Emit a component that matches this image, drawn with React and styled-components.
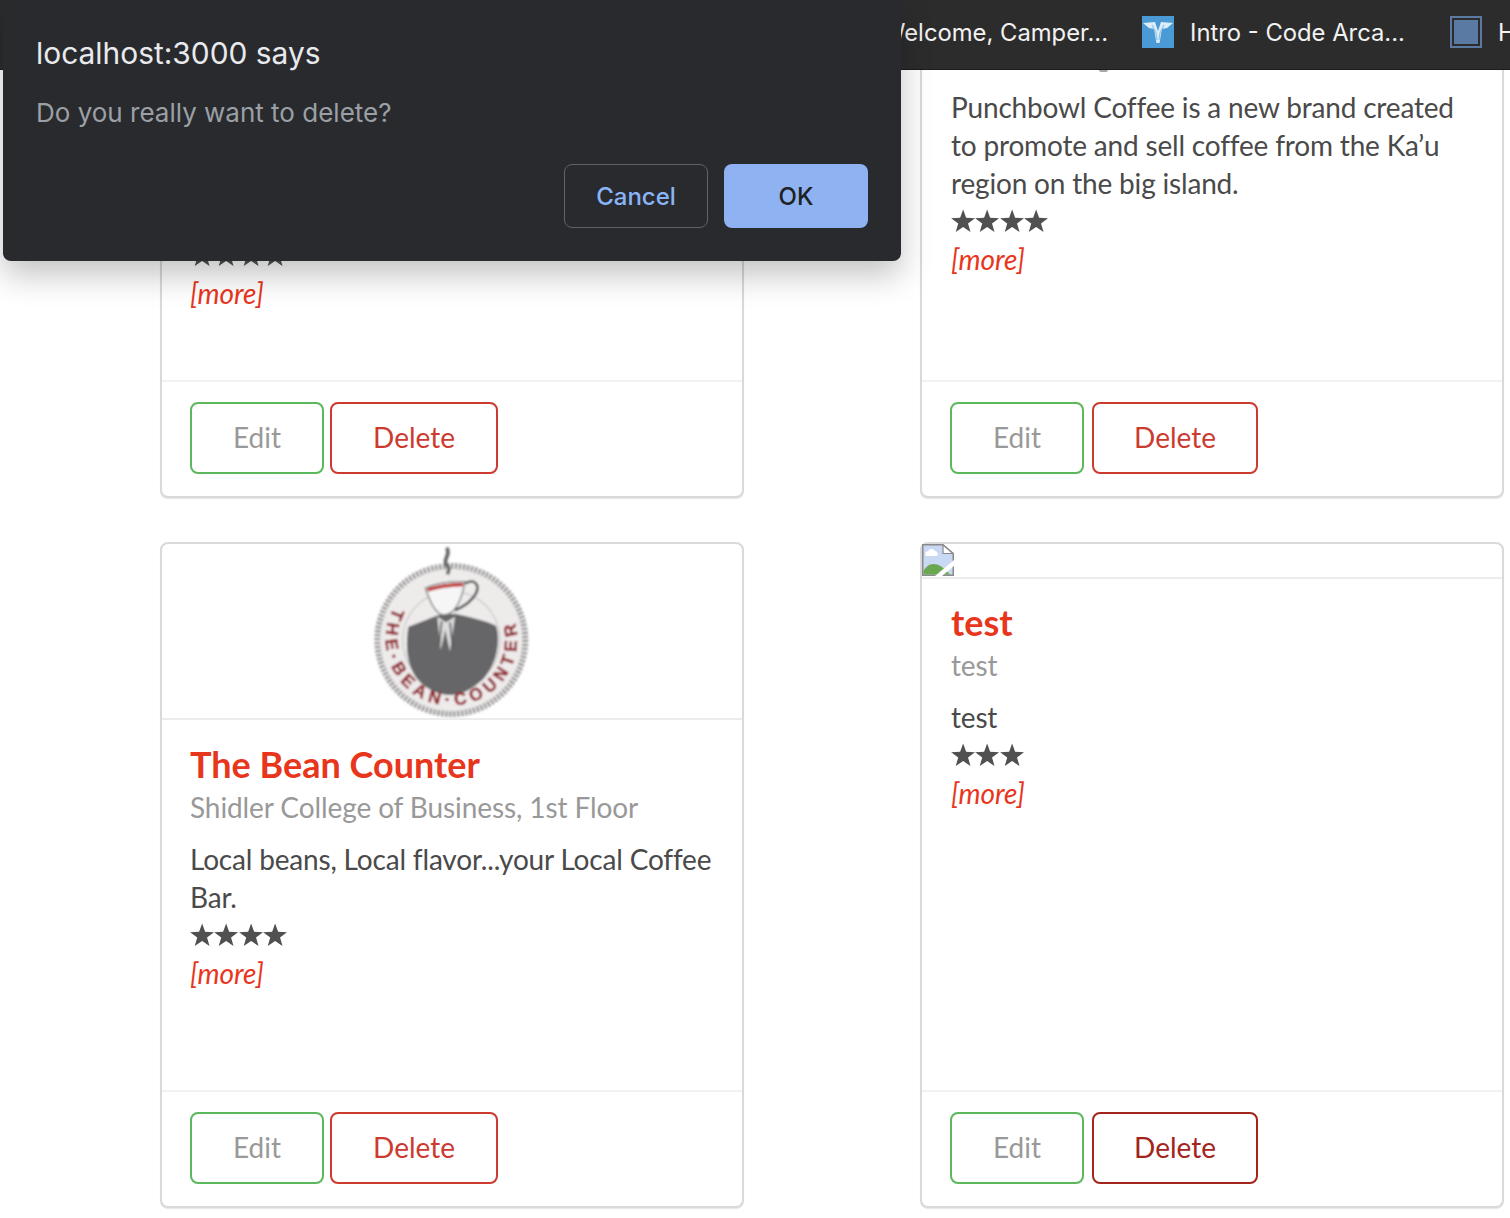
import React from 'react';
import styled, { createGlobalStyle } from 'styled-components';

const GlobalStyle = createGlobalStyle`
  html, body {
    margin: 0;
    padding: 0;
    background: #fff;
  }
  body {
    font-family: Lato, "Liberation Sans", sans-serif;
  }
`;

const Page = styled.div`
  position: relative;
  width: 1510px;
  height: 1218px;
  overflow: hidden;
  background: #fff;
`;

const TabBar = styled.div`
  display: flex;
  align-items: center;
  height: 70px;
  padding: 0 0 5px 882px;
  background: #2c2c2c;
  border-bottom: 1px solid #1c1c1c;
  box-sizing: border-box;
  overflow: hidden;
  white-space: nowrap;
`;

const Tab = styled.div`
  display: flex;
  align-items: center;
  flex: none;
  gap: 16px;
  width: ${(p) => p.$width}px;
`;

const TabTitle = styled.span`
  font-family: Inter, "Liberation Sans", sans-serif;
  font-size: 23.8px;
  color: #f2f2f2;
`;

// tail of a letter from the hidden subtitle, poking out below the tab bar
const Descender = styled.div`
  position: absolute;
  top: 70px;
  left: 1099px;
  width: 9px;
  height: 2px;
  border-radius: 0 0 4px 4px;
  background: #a8a8a8;
`;

const Grid = styled.div`
  display: grid;
  grid-template-columns: 584px 584px;
  grid-template-rows: 428px 666px;
  column-gap: 176px;
  row-gap: 44px;
  padding-left: 160px;
`;

const Card = styled.section`
  display: flex;
  flex-direction: column;
  box-sizing: border-box;
  background: #fff;
  border: 2px solid #d9d9da;
  border-top-width: ${(p) => (p.$clipped ? 0 : 2)}px;
  border-radius: ${(p) => (p.$clipped ? '0 0 8px 8px' : '8px')};
  box-shadow: 0 1px 1px rgba(0, 0, 0, 0.1);
`;

const ImageArea = styled.div`
  display: flex;
  justify-content: ${(p) => (p.$broken ? 'flex-start' : 'center')};
  height: ${(p) => p.$height}px;
  flex: none;
  border-bottom: 2px solid #ececec;
`;

const Body = styled.div`
  flex: 1;
  padding: ${(p) => p.$top}px 28px 0 ${(p) => p.$left || 28}px;
`;

const Title = styled.h2`
  margin: 0;
  font-size: 36px;
  line-height: 46px;
  font-weight: 700;
  color: #e8361c;
`;

const Subtitle = styled.div`
  margin-top: 1px;
  font-size: 28px;
  line-height: 38px;
  color: #999;
  letter-spacing: -0.1px;
`;

const Description = styled.p`
  margin: ${(p) => (p.$flush ? 0 : '14px 0 0')};
  font-size: 28px;
  line-height: 38px;
  color: #4a4a4a;
  letter-spacing: -0.18px;
`;

const Stars = styled.div`
  display: flex;
  height: 38px;
  align-items: center;
`;

const More = styled.a`
  display: block;
  font-size: 28px;
  line-height: 38px;
  font-style: italic;
  color: #e8361c;
`;

const Footer = styled.div`
  display: flex;
  flex: none;
  box-sizing: border-box;
  height: 116px;
  padding: 20px 28px;
  gap: ${(p) => p.$gap}px;
  border-top: 2px solid #f1f1f1;
`;

const Button = styled.button`
  box-sizing: border-box;
  height: 72px;
  width: ${(p) => p.$width}px;
  padding: 0 0 2px;
  background: #fff;
  border: 2px solid ${(p) => p.$border};
  border-radius: 8px;
  color: ${(p) => p.$color};
  font-family: Lato, "Liberation Sans", sans-serif;
  font-size: 28px;
`;

const Dialog = styled.div`
  position: absolute;
  top: 0;
  left: 3px;
  width: 898px;
  height: 261px;
  box-sizing: border-box;
  padding: 35px 33px 0;
  background: #292a2d;
  border-radius: 0 0 8px 8px;
  box-shadow: 0 14px 32px rgba(0, 0, 0, 0.24);
  font-family: Inter, "Liberation Sans", sans-serif;
`;

const DialogTitle = styled.div`
  font-size: 29.9px;
  line-height: 36px;
  color: #e8eaed;
`;

const DialogText = styled.div`
  margin-top: 25px;
  font-size: 26px;
  line-height: 34px;
  color: #9aa0a6;
`;

const DialogActions = styled.div`
  display: flex;
  justify-content: flex-end;
  gap: 16px;
  margin-top: 34px;
`;

const DialogButton = styled.button`
  box-sizing: border-box;
  width: 144px;
  height: 64px;
  border-radius: 8px;
  border: ${(p) => (p.$primary ? 'none' : '1px solid #5f6368')};
  background: ${(p) => (p.$primary ? '#8fb3f2' : 'transparent')};
  color: ${(p) => (p.$primary ? '#202124' : '#8ab4f8')};
  font-family: Inter, "Liberation Sans", sans-serif;
  font-size: 24px;
  font-weight: 500;
`;

const ArcadeIcon = () => (
  <svg width="32" height="32" viewBox="0 0 32 32">
    <rect width="32" height="32" fill="#4a9ad6" />
    <path d="M1 7 L13 6 L16 15 L19 6 L31 7 L25 12 L20 13 L17.5 27 L14.5 27 L12 13 L7 12 Z" fill="#dcedf8" />
    <path d="M10 9 L14 17 L15 24 M22 9 L18 17 L17 24" fill="none" stroke="#8fc3e8" strokeWidth="1.2" />
  </svg>
);

const SquareIcon = () => (
  <svg width="32" height="32" viewBox="0 0 32 32">
    <rect x="1" y="1" width="30" height="30" fill="none" stroke="#5b7aa3" strokeWidth="2" />
    <rect x="4" y="4" width="24" height="24" fill="#5b7aa3" />
  </svg>
);

const BrokenImage = () => (
  <svg width="32" height="32" viewBox="0 0 32 32">
    <path d="M0.75 0.75 H21 L31.25 9.5 V31.25 H0.75 Z" fill="#c9d9f4" stroke="#8a8a8a" strokeWidth="1.5" />
    <path d="M21 1 V9.5 H31 Z" fill="#fff" stroke="#8a8a8a" strokeWidth="1.2" />
    <path d="M4 12 a3 3 0 0 1 2 -5 a4 4 0 0 1 7 0 a3 3 0 0 1 2 5 Z" fill="#fff" />
    <path d="M1.5 30.5 V27 C6 18 16 16 28 30.5 Z" fill="#6aa84f" />
    <path d="M13 32 L32 16 V22 L20 32 Z" fill="#fff" />
  </svg>
);

const StarRow = ({ count }) => (
  <Stars>
    {Array.from({ length: count }).map((_, i) => (
      <svg key={i} width="24.25" height="24" viewBox="0 0 24 24">
        <path d="M12 0.5 L15 8.8 L24 9.2 L16.9 14.6 L19.4 23 L12 18.1 L4.6 23 L7.1 14.6 L0 9.2 L9 8.8 Z" fill="#505050" />
      </svg>
    ))}
  </Stars>
);

const BeanCounterLogo = () => (
  <svg width="176" height="174" viewBox="72 27 528 522">
    <defs>
      <filter id="soft">
        <feGaussianBlur stdDeviation="3" />
      </filter>
      <path id="logoArc" d="M 162 218 A 197 197 0 1 0 506 218" />
    </defs>
    <g filter="url(#soft)">
      <circle cx="334" cy="315" r="230" fill="#eeebeb" />
      <circle cx="334" cy="315" r="222" fill="none" stroke="#868686" strokeWidth="18" strokeDasharray="6 6" />
      <circle cx="334" cy="315" r="146" fill="none" stroke="#999" strokeWidth="4" strokeDasharray="3 4" />
      <path d="M205 275 C240 262 270 250 296 240 L345 236 C390 245 440 258 468 272 C482 310 475 380 430 432 C395 465 360 480 334 480 C290 480 240 455 218 410 C198 370 198 320 205 275 Z" fill="#666667" />
      <path d="M292 245 L302 345 L316 285 L330 350 L345 245 L318 262 Z" fill="#dcdcdc" />
      <path d="M305 258 L298 330 M330 262 L338 340" stroke="#555" strokeWidth="5" fill="none" />
      <path d="M256 160 C270 200 285 235 310 240 C345 240 365 195 375 140 C335 138 285 145 256 160 Z" fill="#f6f6f6" stroke="#777" strokeWidth="4" />
      <path d="M262 160 C295 148 335 145 370 143 L369 154 C335 155 295 160 264 170 Z" fill="#c02f2a" />
      <path d="M375 145 C405 130 420 150 408 175 C395 200 370 215 345 226" fill="none" stroke="#555" strokeWidth="8" />
      <path d="M320 38 C335 60 305 75 320 90 C332 100 325 110 322 118" fill="none" stroke="#666" strokeWidth="11" />
      <text fontFamily="Liberation Sans, sans-serif" fontWeight="700" fontSize="52" letterSpacing="15" fill="#93262e" stroke="#93262e" strokeWidth="1.5">
        <textPath href="#logoArc">THE·BEAN·COUNTER</textPath>
      </text>
    </g>
  </svg>
);

const CardFooter = ({ gap, deleteWidth, deleteColor = '#cc3a30' }) => (
  <Footer $gap={gap}>
    <Button $width="134" $border="#5cb85c" $color="#999">Edit</Button>
    <Button $width={deleteWidth} $border={deleteColor} $color={deleteColor}>Delete</Button>
  </Footer>
);

export default function App() {
  return (
    <Page>
      <GlobalStyle />
      <TabBar>
        <Tab $width="260">
          <TabTitle>Welcome, Camper...</TabTitle>
        </Tab>
        <Tab $width="308">
          <ArcadeIcon />
          <TabTitle>Intro - Code Arca...</TabTitle>
        </Tab>
        <Tab $width="120">
          <SquareIcon />
          <TabTitle>H</TabTitle>
        </Tab>
      </TabBar>

      <Grid>
        <Card $clipped>
          <Body $top="166">
            <StarRow count={4} />
            <More>[more]</More>
          </Body>
          <CardFooter gap="6" deleteWidth="168" />
        </Card>

        <Card $clipped>
          <Body $top="18" $left="29">
            <Description $flush>
              Punchbowl Coffee is a new brand created to promote and sell coffee from the Ka’u region on the big island.
            </Description>
            <StarRow count={4} />
            <More>[more]</More>
          </Body>
          <CardFooter gap="8" deleteWidth="166" />
        </Card>

        <Card>
          <ImageArea $height="174">
            <BeanCounterLogo />
          </ImageArea>
          <Body $top="21">
            <Title>The Bean Counter</Title>
            <Subtitle>Shidler College of Business, 1st Floor</Subtitle>
            <Description>Local beans, Local flavor...your Local Coffee Bar.</Description>
            <StarRow count={4} />
            <More>[more]</More>
          </Body>
          <CardFooter gap="6" deleteWidth="168" />
        </Card>

        <Card>
          <ImageArea $height="33" $broken>
            <BrokenImage />
          </ImageArea>
          <Body $top="20" $left="29">
            <Title>test</Title>
            <Subtitle>test</Subtitle>
            <Description>test</Description>
            <StarRow count={3} />
            <More>[more]</More>
          </Body>
          <CardFooter gap="8" deleteWidth="166" deleteColor="#a3241c" />
        </Card>
      </Grid>

      <Descender />

      <Dialog>
        <DialogTitle>localhost:3000 says</DialogTitle>
        <DialogText>Do you really want to delete?</DialogText>
        <DialogActions>
          <DialogButton>Cancel</DialogButton>
          <DialogButton $primary>OK</DialogButton>
        </DialogActions>
      </Dialog>
    </Page>
  );
}
